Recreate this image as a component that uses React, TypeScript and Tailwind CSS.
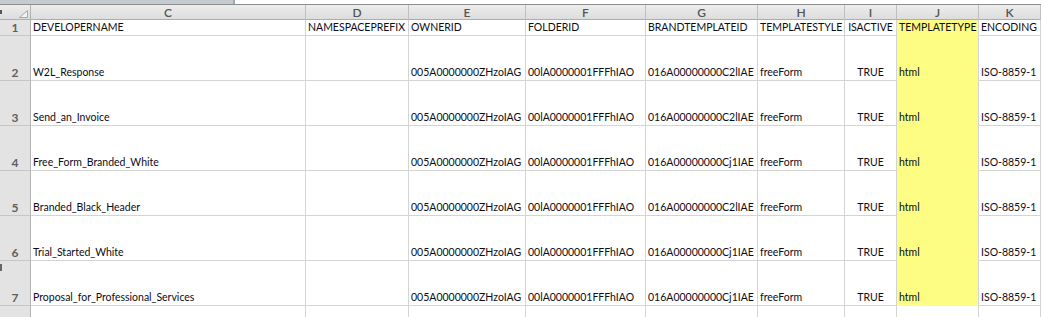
import React from "react";

const cols = [
  { key: "C", w: "w-[275px]" },
  { key: "D", w: "w-[103px]" },
  { key: "E", w: "w-[117px]" },
  { key: "F", w: "w-[120px]" },
  { key: "G", w: "w-[112px]" },
  { key: "H", w: "w-[87px]" },
  { key: "I", w: "w-[52px]" },
  { key: "J", w: "w-[82px]" },
  { key: "K", w: "w-[62px]" },
];

const header = [
  "DEVELOPERNAME",
  "NAMESPACEPREFIX",
  "OWNERID",
  "FOLDERID",
  "BRANDTEMPLATEID",
  "TEMPLATESTYLE",
  "ISACTIVE",
  "TEMPLATETYPE",
  "ENCODING",
];

const owner = "005A0000000ZHzoIAG";
const folder = "00lA0000001FFFhIAO";

const data = [
  ["W2L_Response", "", owner, folder, "016A00000000C2lIAE", "freeForm", "TRUE", "html", "ISO-8859-1"],
  ["Send_an_Invoice", "", owner, folder, "016A00000000C2lIAE", "freeForm", "TRUE", "html", "ISO-8859-1"],
  ["Free_Form_Branded_White", "", owner, folder, "016A00000000Cj1IAE", "freeForm", "TRUE", "html", "ISO-8859-1"],
  ["Branded_Black_Header", "", owner, folder, "016A00000000C2lIAE", "freeForm", "TRUE", "html", "ISO-8859-1"],
  ["Trial_Started_White", "", owner, folder, "016A00000000Cj1IAE", "freeForm", "TRUE", "html", "ISO-8859-1"],
  ["Proposal_for_Professional_Services", "", owner, folder, "016A00000000Cj1IAE", "freeForm", "TRUE", "html", "ISO-8859-1"],
];

function Cell({ i, text, yellow }: { i: number; text: string; yellow: boolean }) {
  const col = cols[i];
  const center = col.key === "I";
  return (
    <div
      className={`${col.w} shrink-0 h-full overflow-hidden flex items-end pb-[1px] px-[2px] border-r border-b ${
        yellow ? "bg-[#fdfd84] border-b-[#fdfd84] border-r-[#d4d4d4]" : "bg-white border-[#d4d4d4]"
      } ${center ? "justify-center" : "justify-start"}`}
    >
      <span className="text-[10.5px] leading-[13px] text-[#0c0c16] whitespace-nowrap">{text}</span>
    </div>
  );
}

function RowHead({ n }: { n: string }) {
  return (
    <div className="w-[31px] shrink-0 h-full flex items-end justify-center pb-[1px] bg-[#e3e3e3] border-r border-b border-r-[#b4b4b4] border-b-[#c6c6c6]">
      <span className="text-[12px] leading-[13px] font-bold text-[#606060]">{n}</span>
    </div>
  );
}

export default function App() {
  return (
    <div className="relative w-[1041px] h-[317px] overflow-hidden bg-white font-['Lato',sans-serif]">
      {/* top strip */}
      <div className="flex h-[4px]">
        <div className="w-[235px] bg-[#c6cad1] border-r-2 border-[#a2a6ad]" />
        <div className="flex-1 bg-white" />
      </div>
      <div className="h-px bg-[#8e8e8e]" />

      {/* column header */}
      <div className="flex h-[15px] bg-gradient-to-b from-[#ededed] to-[#dcdcdc]">
        <div className="relative w-[31px] shrink-0 h-full border-r border-b border-[#b0b0b0]">
          <svg className="absolute right-[2px] bottom-[1px]" width="9" height="8" viewBox="0 0 9 8">
            <polygon points="8.5,0.5 8.5,7.5 0.5,7.5" fill="#f2f2f2" stroke="#a8a8a8" strokeWidth="1" />
          </svg>
        </div>
        {cols.map((c) => (
          <div
            key={c.key}
            className={`${c.w} shrink-0 h-full flex items-center justify-center border-r border-b border-r-[#c0c0c0] border-b-[#adadad]`}
          >
            <span className="text-[12px] leading-[13px] font-semibold text-[#555]">{c.key}</span>
          </div>
        ))}
      </div>

      {/* row 1 */}
      <div className="flex h-[16px]">
        <RowHead n="1" />
        {header.map((t, i) => (
          <Cell key={i} i={i} text={t} yellow={i === 7} />
        ))}
      </div>

      {data.map((r, ri) => (
        <div key={ri} className="flex h-[45px]">
          <RowHead n={String(ri + 2)} />
          {r.map((t, i) => (
            <Cell key={i} i={i} text={t} yellow={i === 7} />
          ))}
        </div>
      ))}

      {/* partial row 8 */}
      <div className="flex h-[20px]">
        <div className="w-[31px] shrink-0 h-full bg-[#e3e3e3] border-r border-[#b4b4b4]" />
        {cols.map((c) => (
          <div key={c.key} className={`${c.w} shrink-0 h-full border-r border-[#d4d4d4]`} />
        ))}
      </div>

      {/* window edge marks */}
      <div className="absolute left-0 top-[10px] w-[2px] h-[4px] bg-[#555]" />
      <div className="absolute left-0 top-[264px] w-[2px] h-[7px] bg-[#666]" />
    </div>
  );
}
